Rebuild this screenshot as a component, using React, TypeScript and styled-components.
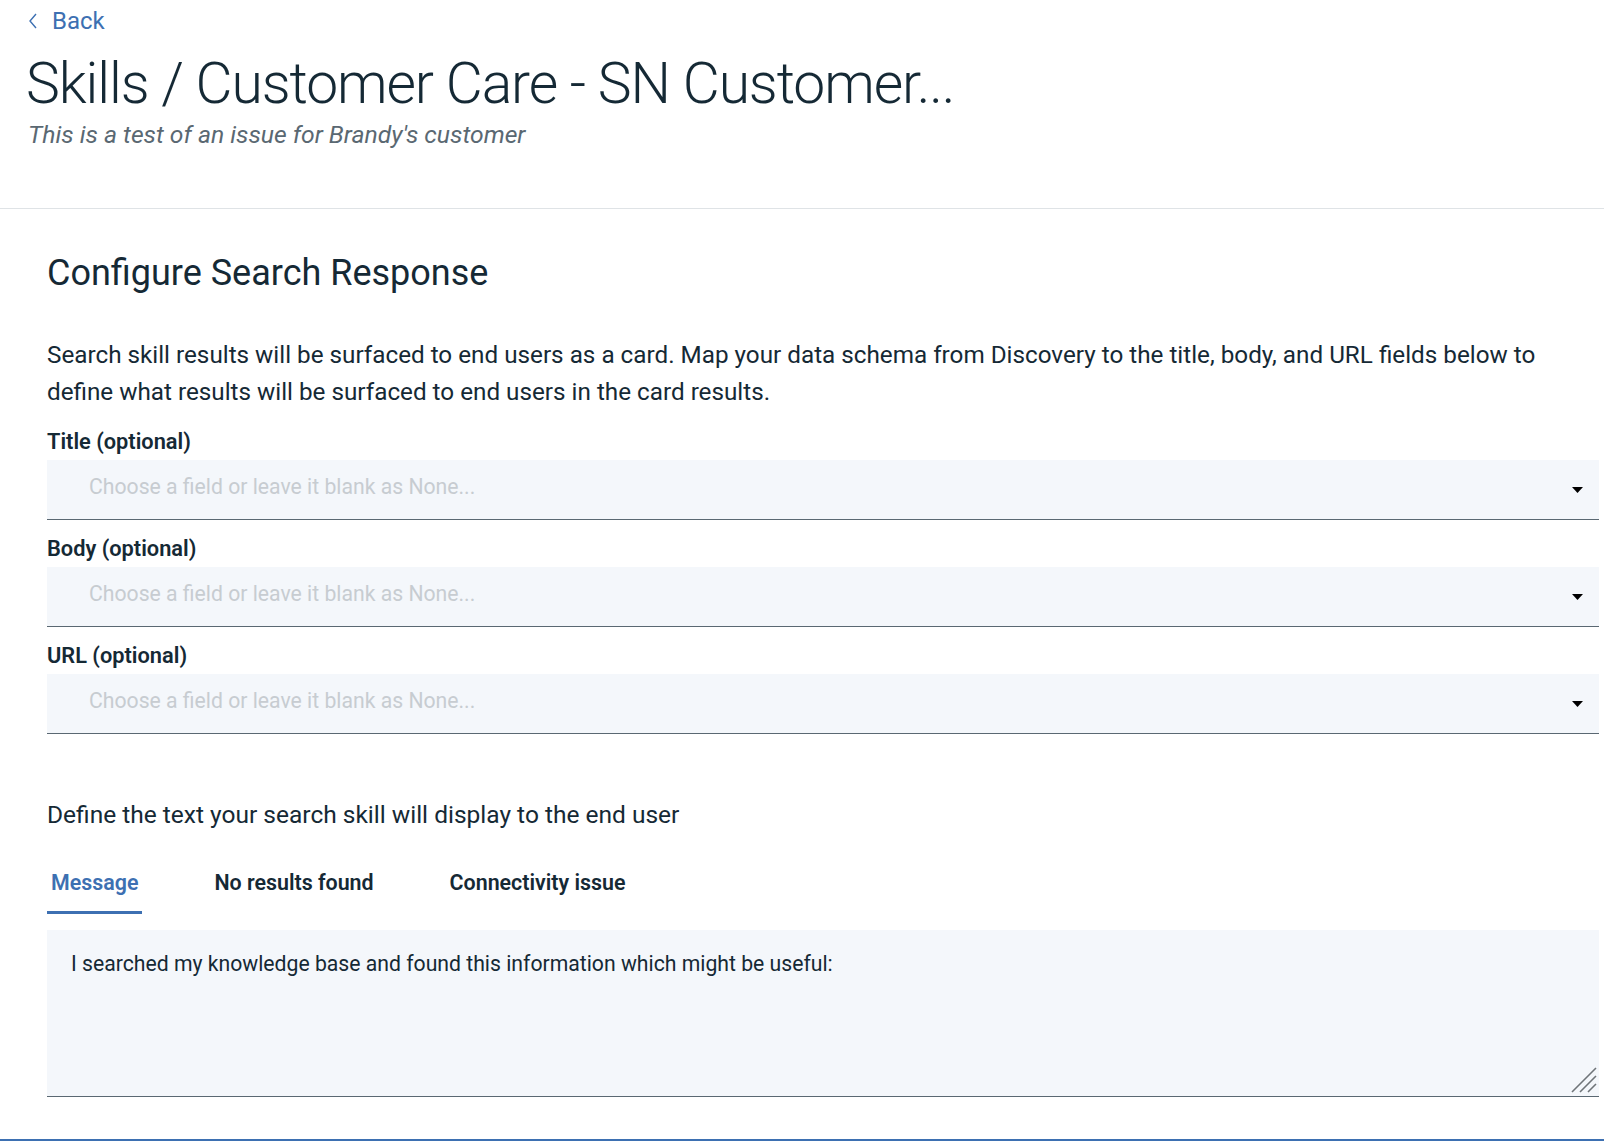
import React from "react";
import styled, { createGlobalStyle } from "styled-components";

const Global = createGlobalStyle`
  html, body { margin: 0; padding: 0; background: #ffffff; }
  body { font-family: Roboto, "Noto Sans", Arial, sans-serif; color: #152935; }
  * { box-sizing: border-box; }
`;

const Page = styled.div`
  width: 1604px;
  min-height: 1146px;
  display: flex;
  flex-direction: column;
`;

const Header = styled.header`
  height: 209px;
  padding-left: 26px;
  border-bottom: 1px solid #dfe3e6;
  display: flex;
  flex-direction: column;
`;

const BackLink = styled.a`
  display: flex;
  align-items: center;
  gap: 14px;
  height: 40px;
  padding: 2px 0 0 2px;
  font-size: 24px;
  color: #3d70b2;
  text-decoration: none;
`;

const Title = styled.h1`
  margin: 8px 0 0;
  font-size: 57px;
  line-height: 72px;
  font-weight: 300;
  letter-spacing: -1.1px;
  color: #152935;
  white-space: nowrap;
`;

const Subtitle = styled.p`
  margin: -3px 0 0;
  padding-left: 2px;
  font-size: 24.7px;
  line-height: 36px;
  font-style: italic;
  color: #5a6872;
`;

const Content = styled.main`
  padding: 40px 5px 0 47px;
  display: flex;
  flex-direction: column;
`;

const SectionTitle = styled.h2`
  margin: 0;
  font-size: 36px;
  line-height: 48px;
  font-weight: 400;
  color: #152935;
`;

const Paragraph = styled.p<{ $top: number; $size: number }>`
  margin: ${(p) => p.$top}px 0 0;
  padding-right: 50px;
  font-size: ${(p) => p.$size}px;
  line-height: 37px;
  color: #152935;
`;

const FieldLabel = styled.label<{ $top: number }>`
  margin-top: ${(p) => p.$top}px;
  display: block;
  font-size: 21.8px;
  line-height: 36px;
  font-weight: 600;
  color: #152935;
`;

const SelectBox = styled.div`
  height: 60px;
  background: #f4f7fb;
  border-bottom: 1px solid #5a6872;
  display: flex;
  align-items: center;
  justify-content: space-between;
  padding: 0 16px 6px 42px;
`;

const Placeholder = styled.span`
  font-size: 21.2px;
  color: #c7ccd1;
`;

const ArrowIcon = styled.svg`
  margin-top: 6px;
`;

const Tabs = styled.nav`
  margin-top: 32px;
  display: flex;
  gap: 68px;
`;

const Tab = styled.button<{ $active?: boolean }>`
  border: none;
  background: none;
  padding: 0 4px 10px;
  font-family: inherit;
  font-size: 21.4px;
  line-height: 36px;
  font-weight: 600;
  color: ${(p) => (p.$active ? "#3d70b2" : "#152935")};
  border-bottom: 3px solid ${(p) => (p.$active ? "#3d70b2" : "transparent")};
  cursor: pointer;
`;

const AreaWrap = styled.div`
  position: relative;
  margin-top: 16px;
`;

const MessageArea = styled.textarea`
  display: block;
  height: 167px;
  width: 100%;
  resize: none;
  border: none;
  border-bottom: 1px solid #5a6872;
  background: #f4f7fb;
  padding: 16px 24px;
  font-family: inherit;
  font-size: 21.2px;
  line-height: 36px;
  color: #152935;
  outline: none;
`;

const Grip = styled.svg`
  position: absolute;
  right: 2px;
  bottom: 4px;
  pointer-events: none;
`;

const Footer = styled.footer`
  margin-top: 42px;
  flex: 1;
  border-top: 2px solid #3d70b2;
`;

const Arrow = () => (
  <ArrowIcon width="11" height="6" viewBox="0 0 11 6">
    <path d="M0 0h11L5.5 6z" fill="#000" />
  </ArrowIcon>
);

const Chevron = () => (
  <svg width="10" height="16" viewBox="0 0 10 16">
    <path d="M8 1L2 8l6 7" fill="none" stroke="#3d70b2" strokeWidth="1.4" />
  </svg>
);

const fields = [
  { label: "Title (optional)", top: 13 },
  { label: "Body (optional)", top: 11 },
  { label: "URL (optional)", top: 11 },
];

export default function App() {
  return (
    <Page>
      <Global />
      <Header>
        <BackLink href="#">
          <Chevron />
          Back
        </BackLink>
        <Title>Skills / Customer Care - SN Customer...</Title>
        <Subtitle>This is a test of an issue for Brandy's customer</Subtitle>
      </Header>
      <Content>
        <SectionTitle>Configure Search Response</SectionTitle>
        <Paragraph $top={40} $size={24.25}>
          Search skill results will be surfaced to end users as a card. Map your data schema from
          Discovery to the title, body, and URL fields below to define what results will be
          surfaced to end users in the card results.
        </Paragraph>
        {fields.map((f) => (
          <React.Fragment key={f.label}>
            <FieldLabel $top={f.top}>{f.label}</FieldLabel>
            <SelectBox>
              <Placeholder>Choose a field or leave it blank as None...</Placeholder>
              <Arrow />
            </SelectBox>
          </React.Fragment>
        ))}
        <Paragraph $top={62} $size={24.5}>
          Define the text your search skill will display to the end user
        </Paragraph>
        <Tabs>
          <Tab $active>Message</Tab>
          <Tab>No results found</Tab>
          <Tab>Connectivity issue</Tab>
        </Tabs>
        <AreaWrap>
          <MessageArea defaultValue="I searched my knowledge base and found this information which might be useful:" />
          <Grip width="26" height="26" viewBox="0 0 26 26">
            <path d="M1 25L25 1M9 25L25 9M17 25L25 17" stroke="#6f7479" strokeWidth="1.6" />
          </Grip>
        </AreaWrap>
      </Content>
      <Footer />
    </Page>
  );
}
